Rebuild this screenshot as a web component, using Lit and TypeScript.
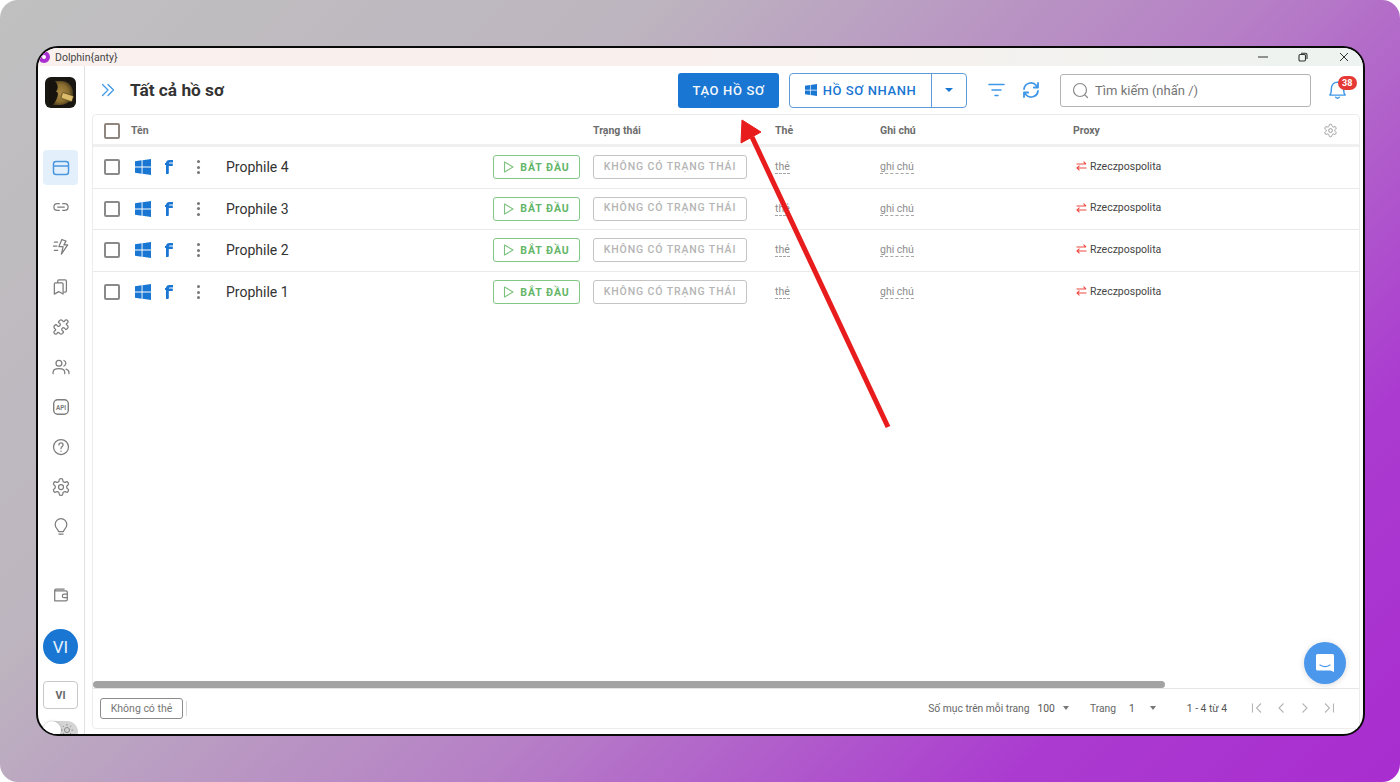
import { LitElement, html, css, svg } from "lit";
import { customElement } from "lit/decorators.js";

const WIN = html`<svg class="win" viewBox="0 0 16 16"><path d="M0 2.3 6.6 1.3V7.5H0ZM7.5 1.2 16 0V7.5H7.5ZM0 8.5H6.6V14.7L0 13.7ZM7.5 8.5H16V16L7.5 14.8Z"/></svg>`;
const ROWS = ["Prophile 4", "Prophile 3", "Prophile 2", "Prophile 1"];
const GEAR = "M12.22 2h-.44a2 2 0 0 0-2 2v.18a2 2 0 0 1-1 1.73l-.43.25a2 2 0 0 1-2 0l-.15-.08a2 2 0 0 0-2.73.73l-.22.38a2 2 0 0 0 .73 2.73l.15.1a2 2 0 0 1 1 1.72v.51a2 2 0 0 1-1 1.74l-.15.09a2 2 0 0 0-.73 2.73l.22.38a2 2 0 0 0 2.73.73l.15-.08a2 2 0 0 1 2 0l.43.25a2 2 0 0 1 1 1.73V20a2 2 0 0 0 2 2h.44a2 2 0 0 0 2-2v-.18a2 2 0 0 1 1-1.73l.43-.25a2 2 0 0 1 2 0l.15.08a2 2 0 0 0 2.73-.73l.22-.39a2 2 0 0 0-.73-2.73l-.15-.08a2 2 0 0 1-1-1.74v-.5a2 2 0 0 1 1-1.74l.15-.09a2 2 0 0 0 .73-2.73l-.22-.38a2 2 0 0 0-2.73-.73l-.15.08a2 2 0 0 1-2 0l-.43-.25a2 2 0 0 1-1-1.73V4a2 2 0 0 0-2-2z";
const PUZZLE = "M19.439 7.85c-.049.322.059.648.289.878l1.568 1.568c.47.47.706 1.087.706 1.704s-.235 1.233-.706 1.704l-1.611 1.611a.98.98 0 0 1-.837.276c-.47-.07-.802-.48-.968-.925a2.501 2.501 0 1 0-3.214 3.214c.446.166.855.497.925.968a.979.979 0 0 1-.276.837l-1.61 1.61a2.404 2.404 0 0 1-1.705.707 2.402 2.402 0 0 1-1.704-.706l-1.568-1.568a1.026 1.026 0 0 0-.877-.29c-.493.074-.84.504-1.02.968a2.5 2.5 0 1 1-3.237-3.237c.464-.18.894-.527.967-1.02a1.026 1.026 0 0 0-.289-.877l-1.568-1.568A2.402 2.402 0 0 1 1.998 12c0-.617.236-1.234.706-1.704L4.23 8.77c.24-.24.581-.353.917-.303.515.077.877.528 1.073 1.01a2.5 2.5 0 1 0 3.259-3.259c-.482-.196-.933-.558-1.01-1.073-.05-.336.062-.676.303-.917l1.525-1.525A2.402 2.402 0 0 1 12 1.998c.617 0 1.234.236 1.704.706l1.568 1.568c.23.23.556.338.877.29.493-.074.84-.504 1.02-.968a2.5 2.5 0 1 1 3.237 3.237c-.464.18-.894.527-.967 1.02Z";

const navIcon = (body: unknown) => html`<div class="nav"><svg viewBox="0 0 24 24" width="20" height="20" fill="none" stroke="#7d7d7d" stroke-width="1.5" stroke-linecap="round" stroke-linejoin="round">${body}</svg></div>`;

@customElement("app-root")
export class AppRoot extends LitElement {
  static styles = css`
    :host { display: block; width: 1400px; height: 782px; background: #fff; font-family: Roboto, "Noto Sans", sans-serif; overflow: hidden; }
    .page { position: relative; box-sizing: border-box; width: 1400px; height: 782px; padding: 46px 35px 46px 36px; border-radius: 18px; overflow: hidden;
      background: linear-gradient(135deg, #c0c0c0 0%, #bdb5bf 30%, #b67fc6 58%, #ab3bd0 82%, #a92dd0 100%); }
    .window { position: relative; box-sizing: border-box; height: 690px; border: 2px solid #0a0a0a; border-radius: 22px; background: #fff; overflow: hidden; display: flex; flex-direction: column; }
    .titlebar { height: 18px; flex: none; display: flex; align-items: center; background: linear-gradient(90deg, #faf0ee 0%, #f9f0ee 50%, #edf3f0 100%); color: #444; font-size: 10.5px; }
    .logo-o { width: 12px; height: 12px; border-radius: 50%; border: 4px solid #a92fd0; box-sizing: border-box; margin: 0 5px 0 0; background: #fff; }
    .tb-spacer { flex: 1; }
    .wc { display: flex; width: 14px; justify-content: center; }
    .wc.a { margin-right: 26px; }
    .wc.b { margin-right: 27px; }
    .wc.c { margin-right: 12px; }
    .body { flex: 1; min-height: 0; display: flex; }
    .side { width: 47px; flex: none; box-sizing: border-box; border-right: 1px solid #e2e2e2; display: flex; flex-direction: column; align-items: center; padding: 11px 1px 0 0; }
    .applogo { width: 31px; height: 31px; border-radius: 6px; overflow: hidden; flex: none; margin-bottom: 42px; }
    .nav { width: 35px; height: 35px; margin-bottom: 5px; border-radius: 4px; flex: none; display: flex; align-items: center; justify-content: center; }
    .nav.active { background: #e3f0fb; margin-bottom: 4px; }
    .wallet { margin-top: 28px; margin-bottom: 17px; }
    .avatar { width: 35px; height: 35px; flex: none; border-radius: 50%; background: #1976d2; color: #e8f2fb; font-size: 17px; display: flex; align-items: center; justify-content: center; margin-bottom: 17px; }
    .lang { width: 35px; height: 28px; flex: none; box-sizing: border-box; border: 1px solid #c9c9c9; border-radius: 4px; font-size: 10.5px; font-weight: 700; color: #666; display: flex; align-items: center; justify-content: center; margin-bottom: 12px; }
    .toggle { width: 35px; height: 22px; flex: none; border-radius: 11px; background: #d4d4d4; position: relative; display: flex; justify-content: flex-end; padding-top: 2px; box-sizing: border-box; }
    .knob { position: absolute; left: 0; top: 0; width: 18px; height: 18px; border-radius: 50%; background: #fff; box-shadow: 0 0 2px rgba(0,0,0,.3); }
    .sun { margin-right: 4px; }
    .main { flex: 1; min-width: 0; display: flex; flex-direction: column; padding: 0 3px 5px 7px; }
    .topbar { height: 48px; flex: none; display: flex; align-items: center; padding-left: 9px; }
    h1 { margin: 0 0 0 15px; font-size: 17.3px; font-weight: 700; color: #333; white-space: nowrap; }
    .create { margin-left: 454px; width: 101px; height: 35px; border: 0; border-radius: 3px; background: #1976d2; color: #f3f8fd; font: 500 13px Roboto, sans-serif; letter-spacing: .65px; padding: 0; }
    .quick { margin-left: 10px; width: 178px; height: 35px; box-sizing: border-box; border: 1px solid #5f9bd8; border-radius: 4px; display: flex; color: #1976d2; font-size: 13px; font-weight: 500; letter-spacing: .6px; }
    .q-main { width: 141px; display: flex; align-items: center; justify-content: center; gap: 6px; border-right: 1px solid #5f9bd8; white-space: nowrap; }
    .q-main svg { width: 12px; height: 12px; fill: #1976d2; }
    .q-drop { flex: 1; display: flex; align-items: center; justify-content: center; }
    .caret-b { width: 0; height: 0; border: 4px solid transparent; border-top: 4px solid #1976d2; border-bottom: 0; }
    .ico-filter { margin-left: 21px; display: flex; }
    .ico-refresh { margin-left: 17px; display: flex; }
    .search { margin-left: 20px; width: 251px; height: 33px; box-sizing: border-box; border: 1px solid #b3b3b3; border-radius: 3px; display: flex; align-items: center; padding-left: 11px; gap: 6px; color: #757575; font-size: 13px; white-space: nowrap; }
    .bell { margin-left: 18px; position: relative; display: flex; }
    .badge { position: absolute; left: 9px; top: -4.5px; width: 18.5px; height: 14px; border-radius: 7px; background: #e53935; color: #fff; font-size: 9px; font-weight: 700; display: flex; align-items: center; justify-content: center; }
    .card { flex: 1; min-height: 0; box-sizing: border-box; border: 1px solid #ececec; border-radius: 4px; display: flex; flex-direction: column; }
    .grid { display: grid; grid-template-columns: 500px 182px 105px 193px 1fr auto; align-items: center; }
    .head { height: 27px; padding-top: 2px; flex: none; border-bottom: 3px solid #f0f0f0; box-sizing: content-box; font-size: 10.5px; font-weight: 700; color: #6d6d6d; }
    .name-cell { display: flex; align-items: center; padding-left: 11px; }
    .check { width: 16px; height: 16px; flex: none; box-sizing: border-box; border: 2px solid #8a8a8a; border-radius: 2px; background: #fff; }
    .head .check { border-color: #8f8680; }
    .tname { margin-left: 11px; }
    .gear { display: flex; justify-content: flex-end; padding-right: 21px; }
    .row { height: 41.6px; flex: none; box-sizing: border-box; border-bottom: 1px solid #e9e9e9; font-size: 11px; color: #8c8c8c; }
    .row.last { border-bottom-color: transparent; }
    .win { width: 16px; height: 16px; fill: #1976d2; margin-left: 15px; flex: none; }
    .f { width: 9px; height: 14px; margin-left: 14px; flex: none; }
    .dots { width: 3px; margin-left: 23px; flex: none; display: flex; flex-direction: column; gap: 2.5px; }
    .dots i { width: 3px; height: 3px; border-radius: 50%; background: #777; }
    .pname { width: 267px; margin-left: 26px; flex: none; font-size: 14px; color: #333; white-space: nowrap; }
    .start { width: 87px; height: 24px; flex: none; box-sizing: border-box; border: 1px solid #82c785; border-radius: 3px; display: flex; align-items: center; justify-content: center; gap: 6px; color: #64b668; font-size: 10.5px; font-weight: 700; letter-spacing: .95px; white-space: nowrap; }
    .nostatus { width: 154px; height: 24px; box-sizing: border-box; border: 1px solid #c4c4c4; border-radius: 3px; display: flex; align-items: center; justify-content: center; color: #b5b5b5; font-size: 10.5px; font-weight: 500; letter-spacing: .88px; white-space: nowrap; padding-bottom: 2px; }
    .dash { display: inline-block; justify-self: start; border-bottom: 1px dashed #a5a5a5; line-height: 11px; font-size: 10.5px; color: #8c8c8c; padding-bottom: 1px; }
    .proxy { display: flex; align-items: center; gap: 3px; padding-left: 3px; color: #444; font-size: 10.5px; padding-bottom: 2px; }
    .fill { flex: 1; min-height: 0; }
    .scroll { height: 7px; width: 1072px; flex: none; background: #a3a3a3; border-radius: 4px; }
    .foot { height: 40px; flex: none; box-sizing: border-box; border-top: 1px solid #e6e6e6; display: flex; align-items: center; font-size: 10.3px; color: #666; }
    .notag { margin-left: 7px; width: 83px; height: 21px; box-sizing: border-box; border: 1px solid #8b8b8b; border-radius: 3px; display: flex; align-items: center; justify-content: center; font-size: 10.5px; color: #777; }
    .vsep { margin-left: 3px; width: 1px; height: 15px; background: #d8d8d8; }
    .pg { display: flex; align-items: center; margin-left: auto; white-space: nowrap; margin-right: 24px; padding-bottom: 1px; }
    .caret { width: 0; height: 0; border: 3.5px solid transparent; border-top: 4px solid #777; border-bottom: 0; }
    .pg .n100 { margin-left: 8px; color: #555; }
    .pg .c1 { margin-left: 8px; }
    .pg .tr { margin-left: 21px; }
    .pg .n1 { margin-left: 13px; color: #555; }
    .pg .c2 { margin-left: 15px; }
    .pg .rng { margin-left: 31px; color: #555; }
    .pager { margin-left: 24px; display: flex; gap: 12px; }
    .chat { position: absolute; left: 1266px; top: 594px; width: 42px; height: 42px; border-radius: 50%; background: #4a97ec; box-shadow: 0 1px 6px rgba(0,0,0,.15); display: flex; align-items: center; justify-content: center; }
    .arrow { position: absolute; left: 0; top: 0; width: 1400px; height: 782px; pointer-events: none; }
  `;

  render() {
    return html`<div class="page">
      <div class="window">
        <div class="titlebar">
          <div class="logo-o"></div><span>Dolphin{anty}</span><div class="tb-spacer"></div>
          <div class="wc a"><svg width="12" height="12" viewBox="0 0 12 12"><path d="M1 6H11" stroke="#333" stroke-width="1"/></svg></div>
          <div class="wc b"><svg width="12" height="12" viewBox="0 0 12 12" fill="none" stroke="#333" stroke-width="1.1"><rect x="2" y="3.5" width="6.5" height="6.5" rx="1.2"/><path d="M4 2.2H8.5A1.5 1.5 0 0 1 10 3.7V8"/></svg></div>
          <div class="wc c"><svg width="12" height="12" viewBox="0 0 12 12"><path d="M2 2 10 10M10 2 2 10" stroke="#333" stroke-width="1"/></svg></div>
        </div>
        <div class="body">
          <aside class="side">
            <div class="applogo"><svg viewBox="0 0 31 31" width="31" height="31"><defs><radialGradient id="lg" cx=".45" cy=".5" r=".6"><stop offset="0" stop-color="#a98a44"/><stop offset=".6" stop-color="#8a6e30"/><stop offset="1" stop-color="#3c3018"/></radialGradient></defs><rect width="31" height="31" fill="#1a1712"/><path d="M5 4H16C24 4 28 10 28 16 28 23 22 28 15 28H5Z" fill="url(#lg)"/><path d="M4 3H9C13 7 14 11 11 14.500L13 16C13 20 11 24 8 28H4Z" fill="#16130e"/><rect x="16.500" y="17" width="11.500" height="6" rx="1" transform="rotate(18 22 20)" fill="#dcbc6a" stroke="#4b3b17" stroke-width=".6"/></svg></div>
            <div class="nav active"><svg viewBox="0 0 20 20" width="20" height="20" fill="none" stroke="#4a97e0" stroke-width="1.5"><rect x="2.5" y="3.5" width="15" height="13" rx="2.5"/><path d="M2.5 8H17.5"/></svg></div>
            ${navIcon(svg`<path d="M10 8H7.5a4 4 0 0 0 0 8H10M14 8h2.5a4 4 0 0 1 0 8H14M8 12H16"/>`)}
            ${navIcon(svg`<path d="M4 6H8M3 11H7M4 16H8M13 3 9.5 11.5H14.5L12.5 20.5 20 9.5H15.5L18 5Z"/>`)}
            ${navIcon(svg`<path d="M8 6.5V5A1.5 1.5 0 0 1 9.5 3.5H17A1.5 1.5 0 0 1 18.500 5V16.500A1.500 1.500 0 0 1 17 18H16M5.500 7H13A1.500 1.500 0 0 1 14.500 8.500V20.500L9.300 17.500 4 20.500V8.500A1.500 1.500 0 0 1 5.500 7Z"/>`)}
            ${navIcon(svg`<path transform="translate(1.800 1.800) scale(.85)" stroke-width="1.760" d="${PUZZLE}"/>`)}
            ${navIcon(svg`<circle cx="9.500" cy="7.500" r="3.500"/><path d="M2.500 20V18.500C2.500 15.500 5.500 14 9.500 14S16.500 15.500 16.500 18.500V20M15.500 4.200A3.500 3.500 0 0 1 15.500 10.800M18 14.500C20.500 15.300 21.500 16.800 21.500 18.500V20"/>`)}
            <div class="nav"><svg viewBox="0 0 20 20" width="20" height="20"><rect x="2.700" y="2.700" width="14.600" height="14.600" rx="4" fill="none" stroke="#7d7d7d" stroke-width="1.400"/><text x="10" y="12.500" text-anchor="middle" font-size="6.300" font-weight="700" fill="#7d7d7d" font-family="Roboto">API</text></svg></div>
            ${navIcon(svg`<circle cx="12" cy="12" r="9"/><path d="M9.500 9.500C9.500 6.300 14.500 6.300 14.500 9.500 14.500 11.500 12 11.500 12 14"/><path d="M12 17V17.100"/>`)}
            ${navIcon(svg`<circle cx="12" cy="12" r="3"/><path d="${GEAR}"/>`)}
            ${navIcon(svg`<path d="M9 17.500C9 15 5 13.500 5 9A7 7 0 0 1 19 9C19 13.500 15 15 15 17.500ZM9.500 20.500H14.500"/>`)}
            <div class="nav wallet"><svg viewBox="0 0 20 20" width="18" height="18" fill="none" stroke="#7d7d7d" stroke-width="1.400" stroke-linejoin="round"><path d="M3 5.500H15.500A1.500 1.500 0 0 1 17 7V15A1.500 1.500 0 0 1 15.500 16.500H3ZM3 5.500V5A1.500 1.500 0 0 1 4.500 3.500H14M17 9H13.500A2 2 0 0 0 13.500 13H17"/></svg></div>
            <div class="avatar">VI</div>
            <div class="lang">VI</div>
            <div class="toggle"><div class="knob"></div><svg class="sun" width="14" height="14" viewBox="0 0 14 14" fill="none" stroke="#888" stroke-width="1"><circle cx="7" cy="7" r="2.500"/><path d="M7 1V2.500M7 11.500V13M1 7H2.500M11.500 7H13M2.800 2.800 3.800 3.800M10.200 10.200 11.200 11.200M2.800 11.200 3.800 10.200M10.200 3.800 11.200 2.800"/></svg></div>
          </aside>
          <main class="main">
            <div class="topbar">
              <svg width="14" height="14" viewBox="0 0 14 14" fill="none" stroke="#3f97e8" stroke-width="1.300" stroke-linecap="round" stroke-linejoin="round"><path d="M1.500 1.500 7 7 1.500 12.500M7 1.500 12.500 7 7 12.500"/></svg>
              <h1>Tất cả hồ sơ</h1>
              <button class="create">TẠO HỒ SƠ</button>
              <div class="quick"><div class="q-main"><svg viewBox="0 0 16 16"><path d="M0 2.300 6.600 1.300V7.500H0ZM7.500 1.200 16 0V7.500H7.500ZM0 8.500H6.600V14.700L0 13.700ZM7.500 8.500H16V16L7.500 14.800Z"/></svg>HỒ SƠ NHANH</div><div class="q-drop"><div class="caret-b"></div></div></div>
              <div class="ico-filter"><svg width="17" height="14" viewBox="0 0 17 14" stroke="#3f97e8" stroke-width="1.500" stroke-linecap="round"><path d="M1 1.500H16M4 7H13M7 12.500H10"/></svg></div>
              <div class="ico-refresh"><svg width="18" height="18" viewBox="0 0 18 18" fill="none" stroke="#3f97e8" stroke-width="1.800" stroke-linecap="round" stroke-linejoin="round"><path d="M2 8A7 7 0 0 1 14.300 4.500L16 6.500M16 2V6.500H11.800M16 10A7 7 0 0 1 3.700 13.500L2 11.500M2 16V11.500H6.200"/></svg></div>
              <div class="search"><svg width="17" height="17" viewBox="0 0 17 17" fill="none" stroke="#8a8a8a" stroke-width="1.200" stroke-linecap="round"><circle cx="8" cy="8" r="6.500"/><path d="M12.800 12.800 15.500 15.500"/></svg><span>Tìm kiếm (nhấn /)</span></div>
              <div class="bell"><svg width="17" height="19" viewBox="1.200 1.500 16.600 18" fill="none" stroke="#3f97e8" stroke-width="1.400" stroke-linejoin="round"><path d="M2 15C3.500 13.500 3.500 12 3.500 9 3.500 5 6 2.500 9.500 2.500S15.500 5 15.500 9C15.500 12 15.500 13.500 17 15ZM7.500 16.500C8 18.500 11 18.500 11.500 16.500"/></svg><div class="badge">38</div></div>
            </div>
            <section class="card">
              <div class="grid head">
                <div class="name-cell"><div class="check"></div><span class="tname">Tên</span></div>
                <div>Trạng thái</div><div>Thẻ</div><div>Ghi chú</div><div>Proxy</div>
                <div class="gear"><svg width="15" height="15" viewBox="0 0 24 24" fill="none" stroke="#9a9a9a" stroke-width="1.600" stroke-linejoin="round"><circle cx="12" cy="12" r="3"/><path d="${GEAR}"/></svg></div>
              </div>
              ${ROWS.map((n, i) => html`<div class="grid row ${i === ROWS.length - 1 ? "last" : ""}">
                <div class="name-cell"><div class="check"></div>${WIN}
                  <svg class="f" viewBox="0 0 9 14"><path d="M3 14H1V5H0V3H1C1 1 2.500 0 4.500 0H8V2.400H5.300C4.500 2.400 3.800 2.800 3.800 3.600H7.800V6H3.800V13C3.800 13.600 3.500 14 3 14Z" fill="#1976d2"/></svg>
                  <div class="dots"><i></i><i></i><i></i></div>
                  <div class="pname">${n}</div>
                  <div class="start"><svg width="11" height="12" viewBox="0 0 11 12" fill="none" stroke="#7cc27f" stroke-width="1.100" stroke-linejoin="round"><path d="M1.500 1V11L10 6Z"/></svg>BẮT ĐẦU</div>
                </div>
                <div class="nostatus">KHÔNG CÓ TRẠNG THÁI</div>
                <div><span class="dash">thẻ</span></div>
                <div><span class="dash">ghi chú</span></div>
                <div class="proxy"><svg width="11" height="10" viewBox="0 0 11 10" fill="none" stroke="#ef4b43" stroke-width="1.100"><path d="M0.500 3H10M7.500 0.700 10 3M10.500 7H1M3.500 4.700 1 7 3.500 9.300"/></svg><span>Rzeczpospolita</span></div>
                <div></div>
              </div>`)}
              <div class="fill"></div>
              <div class="scroll"></div>
              <div class="foot">
                <div class="notag">Không có thẻ</div><div class="vsep"></div>
                <div class="pg">
                  <span>Số mục trên mỗi trang</span><span class="n100">100</span><div class="caret c1"></div>
                  <span class="tr">Trang</span><span class="n1">1</span><div class="caret c2"></div>
                  <span class="rng">1 - 4 từ 4</span>
                  <div class="pager">
                    <svg width="12" height="12" viewBox="0 0 12 12" fill="none" stroke="#b5b5b5" stroke-width="1.100"><path d="M1.500 1.500V10.500M10 1.500 5.500 6 10 10.500"/></svg>
                    <svg width="12" height="12" viewBox="0 0 12 12" fill="none" stroke="#b5b5b5" stroke-width="1.100"><path d="M8.500 1.500 4 6 8.500 10.500"/></svg>
                    <svg width="12" height="12" viewBox="0 0 12 12" fill="none" stroke="#b5b5b5" stroke-width="1.100"><path d="M3.500 1.500 8 6 3.500 10.500"/></svg>
                    <svg width="12" height="12" viewBox="0 0 12 12" fill="none" stroke="#b5b5b5" stroke-width="1.100"><path d="M10.500 1.500V10.500M2 1.500 6.500 6 2 10.500"/></svg>
                  </div>
                </div>
              </div>
            </section>
          </main>
        </div>
        <div class="chat"><svg width="24" height="24" viewBox="0 0 24 24"><path d="M4.500 3H19.500A1.500 1.500 0 0 1 21 4.500V21L17.500 19.500H4.500A1.500 1.500 0 0 1 3 18V4.500A1.500 1.500 0 0 1 4.500 3Z" fill="#fff"/><path d="M7 14C10 16 14 16 17 14" fill="none" stroke="#4a97ec" stroke-width="1.200" stroke-linecap="round"/></svg></div>
      </div>
      <svg class="arrow" viewBox="0 0 1400 782"><path d="M888 427 752 137" stroke="#e81c1c" stroke-width="5" fill="none"/><path d="M742 120 741 143 761 132Z" fill="#e81c1c" stroke="#e81c1c" stroke-width="1"/></svg>
    </div>`;
  }
}
